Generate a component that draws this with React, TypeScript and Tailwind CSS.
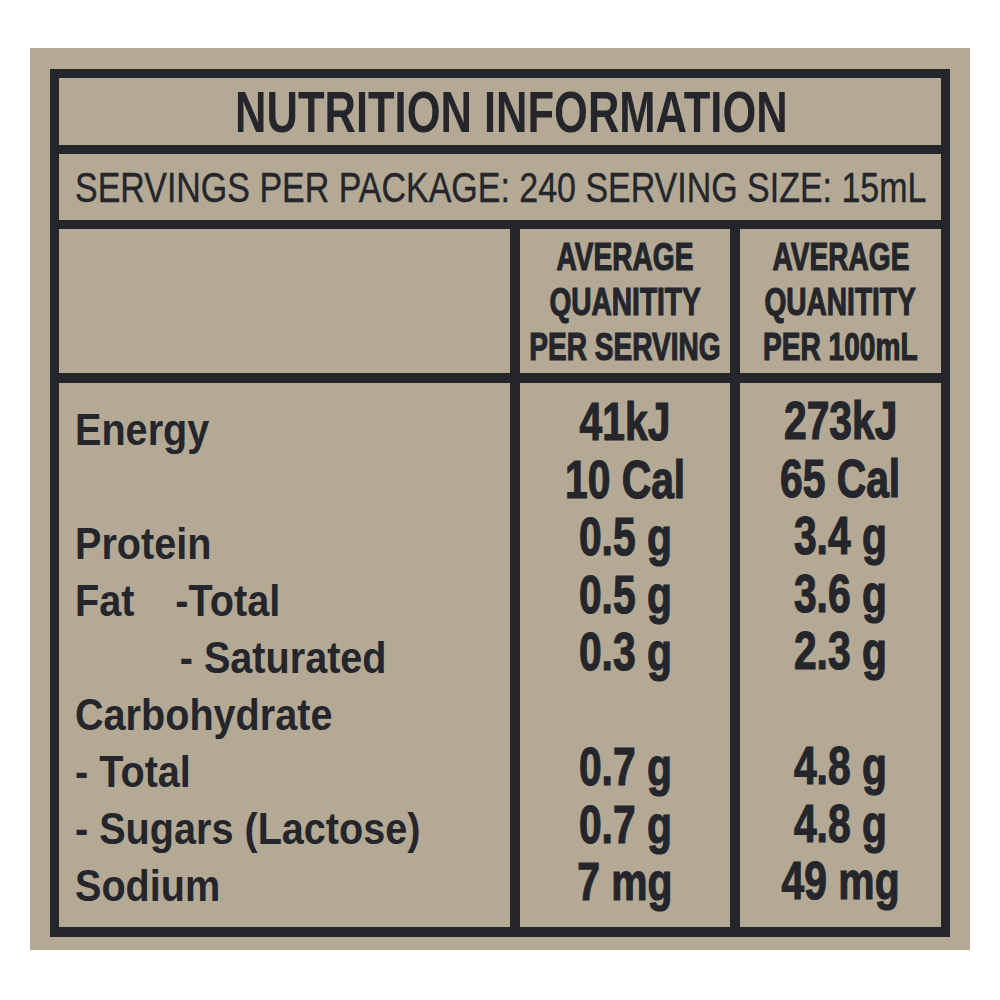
import React from 'react';

type Row = { label: React.ReactNode; serving?: string; per100?: string };

const rows: Row[] = [
    { label: 'Energy', serving: '41kJ', per100: '273kJ' },
    { label: '', serving: '10 Cal', per100: '65 Cal' },
    { label: 'Protein', serving: '0.5 g', per100: '3.4 g' },
    {
        label: (
            <>
                <span className="inline-block w-[114px]">Fat</span>-Total
            </>
        ),
        serving: '0.5 g',
        per100: '3.6 g',
    },
    {
        label: <span className="pl-[119px]">- Saturated</span>,
        serving: '0.3 g',
        per100: '2.3 g',
    },
    { label: 'Carbohydrate' },
    { label: '- Total', serving: '0.7 g', per100: '4.8 g' },
    { label: '- Sugars (Lactose)', serving: '0.7 g', per100: '4.8 g' },
    { label: 'Sodium', serving: '7 mg', per100: '49 mg' },
];

function ColumnHead({ last }: { last: string }) {
    return (
        <div className="flex flex-col items-center justify-center text-[39px] font-bold leading-[45px] whitespace-nowrap [-webkit-text-stroke:1.2px_#24262b]">
            <span className="inline-block scale-x-[0.72]">AVERAGE</span>
            <span className="inline-block scale-x-[0.72]">QUANITITY</span>
            <span className="inline-block scale-x-[0.72]">{last}</span>
        </div>
    );
}

export default function App() {
    return (
        <div className="w-[1000px] h-[1000px] bg-white pt-[48px] pl-[30px] font-['Liberation_Sans',Arial,sans-serif] text-[#24262b]">
            {/* cardboard */}
            <div className="w-[940px] h-[902px] bg-[#b3a994] pt-[21px] pl-[20px] overflow-hidden">
                <div className="w-[900px] border-[9px] border-[#24262b] border-b-[10px]">
                    {/* title */}
                    <div className="h-[76px] flex items-center justify-center pl-[22px] border-b-[9px] border-[#24262b]">
                        <h1 className="inline-block text-[58px] font-bold leading-none whitespace-nowrap scale-x-[0.75]">
                            NUTRITION INFORMATION
                        </h1>
                    </div>

                    {/* servings */}
                    <div className="h-[75px] flex items-center pl-[16px] border-b-[9px] border-[#24262b] overflow-hidden">
                        <p className="inline-block text-[43px] leading-none whitespace-nowrap origin-left scale-x-[0.79] [-webkit-text-stroke:0.4px_#24262b]">
                            SERVINGS PER PACKAGE: 240 SERVING SIZE: 15mL
                        </p>
                    </div>

                    {/* column headers */}
                    <div className="flex h-[154px] border-b-[10px] border-[#24262b]">
                        <div className="w-[461px] shrink-0 border-r-[10px] border-[#24262b]" />
                        <div className="w-[220px] shrink-0 min-w-0 border-r-[10px] border-[#24262b] flex justify-center">
                            <ColumnHead last="PER SERVING" />
                        </div>
                        <div className="flex-1 min-w-0 flex justify-center">
                            <ColumnHead last="PER 100mL" />
                        </div>
                    </div>

                    {/* body */}
                    <div className="flex h-[544px]">
                        <div className="w-[461px] shrink-0 border-r-[10px] border-[#24262b] pt-[18px] pl-[16px]">
                            {rows.map((r, i) => (
                                <div key={i} className="h-[57px] flex items-center text-[45px] font-bold leading-none whitespace-pre">
                                    <span className="inline-block origin-left scale-x-[0.88]">{r.label}</span>
                                </div>
                            ))}
                        </div>
                        <div className="w-[220px] shrink-0 min-w-0 border-r-[10px] border-[#24262b] pt-[10px]">
                            {rows.map((r, i) => (
                                <div key={i} className="h-[57.5px] flex items-center justify-center text-[53px] font-bold leading-none whitespace-nowrap [-webkit-text-stroke:1.2px_#24262b]">
                                    <span className="inline-block scale-x-[0.77]">{r.serving ?? ''}</span>
                                </div>
                            ))}
                        </div>
                        <div className="flex-1 min-w-0 pt-[9px]">
                            {rows.map((r, i) => (
                                <div key={i} className="h-[57.5px] flex items-center justify-center text-[53px] font-bold leading-none whitespace-nowrap [-webkit-text-stroke:1.2px_#24262b]">
                                    <span className="inline-block scale-x-[0.77]">{r.per100 ?? ''}</span>
                                </div>
                            ))}
                        </div>
                    </div>
                </div>
            </div>
        </div>
    );
}
